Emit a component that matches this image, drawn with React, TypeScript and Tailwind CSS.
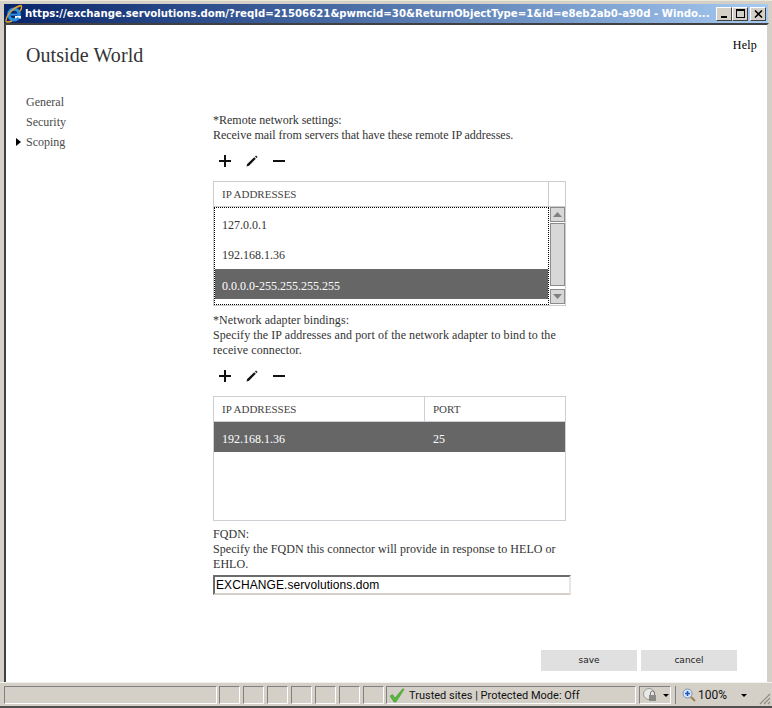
import React from "react";

const Plus = () => (
  <svg width="14" height="14" viewBox="0 0 14 14"><path d="M6 1h2v5h5v2H8v5H6V8H1V6h5z" fill="#111" /></svg>
);
const Pencil = () => (
  <svg width="14" height="14" viewBox="0 0 14 14">
    <path d="M1.5 12.5 L2.2 10 L9.2 3.2 L10.8 4.8 L4 11.8 Z" fill="#111" />
    <path d="M10 2.4 L11 1.4 L12.6 3 L11.6 4 Z" fill="#111" />
  </svg>
);
const Minus = () => (
  <svg width="14" height="14" viewBox="0 0 14 14"><rect x="1" y="6" width="12" height="2" fill="#111" /></svg>
);

const Toolbar = () => (
  <div className="flex items-center gap-[13px] h-[14px] pl-[5px]">
    <Plus />
    <Pencil />
    <Minus />
  </div>
);

const WinBtn = ({ children }: { children: React.ReactNode }) => (
  <div className="w-[16px] h-[14px] bg-[#d4d0c8] border border-t-white border-l-white border-r-[#404040] border-b-[#404040] flex items-center justify-center">
    {children}
  </div>
);

const Panel = ({ className, children }: { className: string; children?: React.ReactNode }) => (
  <div className={"h-[18px] border border-t-[#808080] border-l-[#808080] border-r-white border-b-white flex items-center shrink-0 " + className}>
    {children}
  </div>
);

const Arrow = ({ up }: { up?: boolean }) => (
  <div className="w-[15px] h-[15px] border border-[#8c8c8c] bg-[#d8d8d8] flex items-center justify-center">
    <svg width="9" height="5" viewBox="0 0 9 5">
      <path d={up ? "M4.5 0 L9 5 H0 Z" : "M0 0 H9 L4.5 5 Z"} fill="#808080" />
    </svg>
  </div>
);

export default function App() {
  return (
    <div className="w-[772px] h-[708px] bg-[#d4d0c8] flex flex-col overflow-hidden border-t-[1px] border-t-[#ece9d8] font-['Liberation_Serif',serif] text-[12px] leading-[15px] text-[#333]">
      {/* title bar */}
      <div className="mt-[3px] mx-[4px] h-[19px] shrink-0 bg-gradient-to-r from-[#0a246a] to-[#a6caf0] flex items-center pl-[1px] pr-[2px]">
        <svg width="19" height="19" viewBox="0 0 19 19" className="shrink-0 -ml-[1px]">
          <ellipse cx="10" cy="10.5" rx="5.2" ry="5.4" fill="none" stroke="#2a8fe0" strokeWidth="3.2" />
          <rect x="6" y="9.6" width="9" height="2" fill="#2a8fe0" />
          <rect x="11" y="12" width="6" height="2.6" fill="white" />
          <path d="M14.5 13.6 A5.4 5.4 0 0 1 10 16" fill="none" stroke="#2a8fe0" strokeWidth="2.4" />
          <path d="M2 16.5 C 3 10 10 3 17 1.5 C 18.5 3 17 6 15.5 7.5" fill="none" stroke="#e8a820" strokeWidth="1.4" />
          <path d="M2 16.5 C 1.5 18.5 4.5 18.5 8 17" fill="none" stroke="#e8a820" strokeWidth="1.4" />
        </svg>
        <div className="ml-[2px] flex-1 font-['DejaVu_Sans',sans-serif] font-bold text-[10.18px] leading-[19px] text-white whitespace-nowrap overflow-hidden">
          https://exchange.servolutions.dom/?reqId=21506621&amp;pwmcid=30&amp;ReturnObjectType=1&amp;id=e8eb2ab0-a90d - Windo...
        </div>
        <div className="flex items-center shrink-0">
          <WinBtn><div className="w-[6px] h-[2px] bg-black mt-[7px] -ml-[1px]" /></WinBtn>
          <WinBtn><div className="w-[9px] h-[9px] border border-black border-t-2" /></WinBtn>
          <div className="ml-[2px]">
            <WinBtn>
              <svg width="9" height="8" viewBox="0 0 9 8"><path d="M1 0.5 L8 7.5 M8 0.5 L1 7.5" stroke="#000" strokeWidth="1.6" /></svg>
            </WinBtn>
          </div>
        </div>
      </div>

      {/* page */}
      <div className="ml-[4px] mr-[3px] h-[659px] shrink-0 bg-white border-t-2 border-l-2 border-t-[#404040] border-l-[#404040] border-r-2 border-r-[#d4d0c8] flex flex-col">
        <div className="flex justify-end pr-[10px] pt-[13px] text-black tracking-[0.2px]">Help</div>
        <div className="flex items-start flex-1">
          {/* nav */}
          <div className="w-[207px] shrink-0">
            <h1 className="ml-[20px] -mt-[10px] text-[20px] leading-[24px] text-[#333] tracking-[0.08px]">Outside World</h1>
            <div className="mt-[25px] ml-[20px] flex flex-col text-[#4a4a4a] leading-[20px]">
              <div>General</div>
              <div>Security</div>
              <div className="relative">
                <div className="absolute -left-[10px] top-[6px] w-0 h-0 border-y-[4px] border-y-transparent border-l-[5px] border-l-black" />
                Scoping
              </div>
            </div>
          </div>

          {/* form */}
          <div className="w-[358px] shrink-0 pt-[60px]">
            <div className="w-[350px]">
              <div>*Remote network settings:</div>
              <div className="whitespace-nowrap tracking-[-0.03px]">Receive mail from servers that have these remote IP addresses.</div>
            </div>
            <div className="mt-[11px]"><Toolbar /></div>

            <div className="mt-[13px] w-[353px] h-[125px] border border-[#ccc] flex flex-col">
              <div className="h-[25px] flex border-b border-[#ccc] shrink-0">
                <div className="w-[335px] border-r border-[#ccc] pl-[8px] leading-[25px] text-[11px] text-[#444]">IP ADDRESSES</div>
              </div>
              <div className="flex-1 flex">
                <div className="w-[335px] h-[98px] border border-dotted border-black pt-[1px]">
                  <div className="h-[30px] pl-[7px] leading-[33px]">127.0.0.1</div>
                  <div className="h-[30px] pl-[7px] leading-[33px]">192.168.1.36</div>
                  <div className="h-[30px] pl-[7px] leading-[35px] bg-[#666] text-white">0.0.0.0-255.255.255.255</div>
                </div>
                <div className="flex-1 flex flex-col pl-[1px] pt-[0px] gap-[1px]">
                  <Arrow up />
                  <div className="w-[15px] h-[63px] bg-[#d8d8d8] border border-[#8c8c8c]" />
                  <div className="h-[1px]" />
                  <Arrow />
                </div>
              </div>
            </div>

            <div className="mt-[7px] w-[350px] tracking-[0.08px]">
              <div>*Network adapter bindings:</div>
              <div>Specify the IP addresses and port of the network adapter to bind to the receive connector.</div>
            </div>
            <div className="mt-[11px]"><Toolbar /></div>

            <div className="mt-[13px] w-[353px] h-[125px] border border-[#ccd0d4]">
              <div className="h-[25px] flex border-b border-[#ccd0d4] text-[11px] leading-[25px] text-[#444]">
                <div className="w-[211px] border-r border-[#ccd0d4] pl-[8px]">IP ADDRESSES</div>
                <div className="pl-[8px]">PORT</div>
              </div>
              <div className="h-[30px] bg-[#666] text-white flex leading-[35px]">
                <div className="w-[211px] pl-[8px]">192.168.1.36</div>
                <div className="pl-[8px]">25</div>
              </div>
            </div>

            <div className="mt-[6px] w-[350px] tracking-[0.045px]">
              <div>FQDN:</div>
              <div>Specify the FQDN this connector will provide in response to HELO or EHLO.</div>
            </div>
            <input
              readOnly
              value="EXCHANGE.servolutions.dom"
              className="mt-[3px] block w-[358px] h-[20px] pl-[1px] bg-white border-2 border-t-[#6b6b6b] border-l-[#6b6b6b] border-r-[#e8e6e0] border-b-[#d4d0c8] font-['Liberation_Sans',sans-serif] text-[12px] tracking-[0.08px] text-black outline-none"
            />
          </div>
        </div>

        {/* buttons */}
        <div className="flex justify-end gap-[4px] pr-[30px] pb-[11px] font-['DejaVu_Sans',sans-serif] text-[9px]">
          <div className="w-[96px] h-[21px] bg-[#e0e0e0] flex items-center justify-center text-[#222]">save</div>
          <div className="w-[96px] h-[21px] bg-[#e0e0e0] flex items-center justify-center text-[#222]">cancel</div>
        </div>
      </div>

      {/* status bar */}
      <div className="flex-1 border-t border-t-[#f4f2ec] border-b-2 border-b-[#505050] flex items-start pl-[4px] pt-[3px] gap-[2px] font-['DejaVu_Sans',sans-serif] text-[11px] text-[#111] relative">
        <Panel className="w-[213px]" />
        <div className="flex gap-[3px]">
          <Panel className="w-[21px]" />
          <Panel className="w-[21px]" />
          <Panel className="w-[21px]" />
          <Panel className="w-[21px]" />
          <Panel className="w-[21px]" />
          <Panel className="w-[21px]" />
          <Panel className="w-[21px]" />
        </div>
        <Panel className="w-[250px] pl-[2px] gap-[4px] whitespace-nowrap">
          <svg width="16" height="16" viewBox="0 0 16 16" className="shrink-0">
            <path d="M1 9 L3.5 7.5 L6 11 L14 1.5 L15 2.5 L7 15 L5 15 Z" fill="#55b83c" stroke="#3a8f2a" strokeWidth="0.5" />
          </svg>
          <span className="font-['Roboto',sans-serif] text-[11px]">Trusted sites | Protected Mode: Off</span>
        </Panel>
        <Panel className="ml-[1px] w-[32px] pl-[2px]">
          <svg width="16" height="16" viewBox="0 0 16 16">
            <circle cx="7" cy="7" r="5.5" fill="#e8e8e4" stroke="#9a9a96" />
            <rect x="7" y="8" width="7" height="6" fill="#8a8a86" />
            <path d="M8.5 8 V6 a2 2 0 0 1 4 0 V8" fill="none" stroke="#777" />
          </svg>
          <div className="ml-[5px] w-0 h-0 border-x-[3px] border-x-transparent border-t-[3px] border-t-black" />
        </Panel>
        <div className="ml-[2px] h-[18px] flex items-center border-l border-l-[#808080] pl-[6px] gap-[2px]">
          <svg width="14" height="14" viewBox="0 0 14 14">
            <circle cx="5.5" cy="5.5" r="4.5" fill="#dbe8f8" stroke="#7a8fb0" />
            <path d="M3 5.5h5M5.5 3v5" stroke="#1d55c4" strokeWidth="1.6" />
            <path d="M9 9l4 4" stroke="#a08050" strokeWidth="2" />
          </svg>
          <span className="font-['Roboto',sans-serif] text-[12px]">100%</span>
          <div className="ml-[12px] w-0 h-0 border-x-[3px] border-x-transparent border-t-[3px] border-t-black" />
        </div>
        <svg width="12" height="12" viewBox="0 0 12 12" className="absolute right-[1px] bottom-[1px]">
          <path d="M11 1 L1 11 M11 5 L5 11 M11 9 L9 11" stroke="#8f8c84" strokeWidth="1.2" />
        </svg>
      </div>
    </div>
  );
}
